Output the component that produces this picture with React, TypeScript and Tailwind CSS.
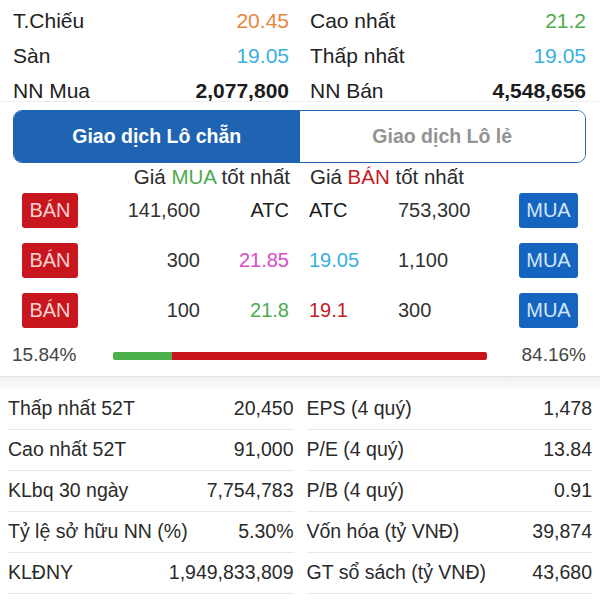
import React from "react"

const font = { fontFamily: '"Liberation Sans", Arial, sans-serif' }

type Quote = { label: string; value: string; color: string; bold?: boolean }

const topLeft: Quote[] = [
  { label: "T.Chiếu", value: "20.45", color: "text-[#e9843c]" },
  { label: "Sàn", value: "19.05", color: "text-[#36b1e0]" },
  { label: "NN Mua", value: "2,077,800", color: "text-[#1c1c1c]", bold: true },
]

const topRight: Quote[] = [
  { label: "Cao nhất", value: "21.2", color: "text-[#4cab4f]" },
  { label: "Thấp nhất", value: "19.05", color: "text-[#36b1e0]" },
  { label: "NN Bán", value: "4,548,656", color: "text-[#1c1c1c]", bold: true },
]

const book = [
  { bidQty: "141,600", bid: "ATC", bidColor: "text-[#1c1c1c]", ask: "ATC", askColor: "text-[#1c1c1c]", askQty: "753,300" },
  { bidQty: "300", bid: "21.85", bidColor: "text-[#d84bc9]", ask: "19.05", askColor: "text-[#36b1e0]", askQty: "1,100" },
  { bidQty: "100", bid: "21.8", bidColor: "text-[#4cab4f]", ask: "19.1", askColor: "text-[#c21d26]", askQty: "300" },
]

const statsLeft = [
  ["Thấp nhất 52T", "20,450"],
  ["Cao nhất 52T", "91,000"],
  ["KLbq 30 ngày", "7,754,783"],
  ["Tỷ lệ sở hữu NN (%)", "5.30%"],
  ["KLĐNY", "1,949,833,809"],
]

const statsRight = [
  ["EPS (4 quý)", "1,478"],
  ["P/E (4 quý)", "13.84"],
  ["P/B (4 quý)", "0.91"],
  ["Vốn hóa (tỷ VNĐ)", "39,874"],
  ["GT sổ sách (tỷ VNĐ)", "43,680"],
]

function QuoteColumn({ items }: { items: Quote[] }) {
  return (
    <div className="flex flex-col">
      {items.map((item) => (
        <div key={item.label} className="flex h-[35px] shrink-0 items-center justify-between text-[21px]">
          <span className="text-[#222]">{item.label}</span>
          <span className={`${item.color} ${item.bold ? "font-semibold" : ""}`}>{item.value}</span>
        </div>
      ))}
    </div>
  )
}

function StatsColumn({ rows }: { rows: string[][] }) {
  return (
    <div className="flex flex-col">
      {rows.map(([label, value]) => (
        <div
          key={label}
          className="flex h-[41px] items-center justify-between border-b border-[#e8e8e8] text-[19.5px] text-[#2a2a2a]"
        >
          <span>{label}</span>
          <span>{value}</span>
        </div>
      ))}
    </div>
  )
}

export default function App() {
  return (
    <div className="h-[600px] w-[600px] overflow-hidden bg-white" style={font}>
      <div className="h-[102px] border-b border-[#efefef] pl-[13px] pr-[14px] pt-[3px]">
        <div className="grid grid-cols-2 gap-x-[21px]">
          <QuoteColumn items={topLeft} />
          <QuoteColumn items={topRight} />
        </div>
      </div>

      <div className="ml-[13px] mr-[14px] mt-[8px] flex h-[53px] overflow-hidden rounded-[9px] border-[1.5px] border-[#1f63b3]">
        <div className="flex flex-1 items-center justify-center bg-[#1f63b3] text-[19.5px] font-bold text-white">
          Giao dịch Lô chẵn
        </div>
        <div className="flex flex-1 items-center justify-center bg-white text-[19.5px] font-bold text-[#939393]">
          Giao dịch Lô lẻ
        </div>
      </div>

      <div className="grid h-[22px] grid-cols-2 text-[20.5px] leading-[27px] text-[#2a2a2a]">
        <div className="pr-[10px] text-right">
          Giá <span className="text-[#4cab4f]">MUA</span> tốt nhất
        </div>
        <div className="pl-[10px]">
          Giá <span className="text-[#c21d26]">BÁN</span> tốt nhất
        </div>
      </div>

      {book.map((row, i) => (
        <div key={i} className="grid h-[50px] grid-cols-2 items-center text-[20px] text-[#333]">
          <div className="flex items-center">
            <span className="ml-[22px] flex h-[35px] w-[56px] items-center justify-center rounded-[3px] bg-[#c8161e] text-[#fbd3d3]">
              BÁN
            </span>
            <span className="w-[122px] text-right">{row.bidQty}</span>
            <span className={`w-[89px] text-right ${row.bidColor}`}>{row.bid}</span>
          </div>
          <div className="flex items-center">
            <span className={`ml-[9px] w-[89px] ${row.askColor}`}>{row.ask}</span>
            <span className="w-[121px]">{row.askQty}</span>
            <span className="flex h-[35px] w-[59px] items-center justify-center rounded-[3px] bg-[#1565c0] text-[#d3e6fd]">
              MUA
            </span>
          </div>
        </div>
      ))}

      <div className="flex h-[41px] items-center pl-[12px] pr-[14px] text-[19px] text-[#444]">
        <span className="w-[64px]">15.84%</span>
        <div className="ml-[37px] flex h-[8px] w-[374px] overflow-hidden rounded-[2px]">
          <div className="h-full w-[15.84%] bg-[#4cb04c]" />
          <div className="h-full flex-1 bg-[#c8151d]" />
        </div>
        <span className="ml-auto">84.16%</span>
      </div>

      <div className="h-[13px] border-t border-[#e2e2e2] bg-gradient-to-b from-[#f1f1f1] to-[#fbfbfb]" />

      <div className="grid grid-cols-2 gap-x-[13px] px-[8px]">
        <StatsColumn rows={statsLeft} />
        <StatsColumn rows={statsRight} />
      </div>
    </div>
  )
}
